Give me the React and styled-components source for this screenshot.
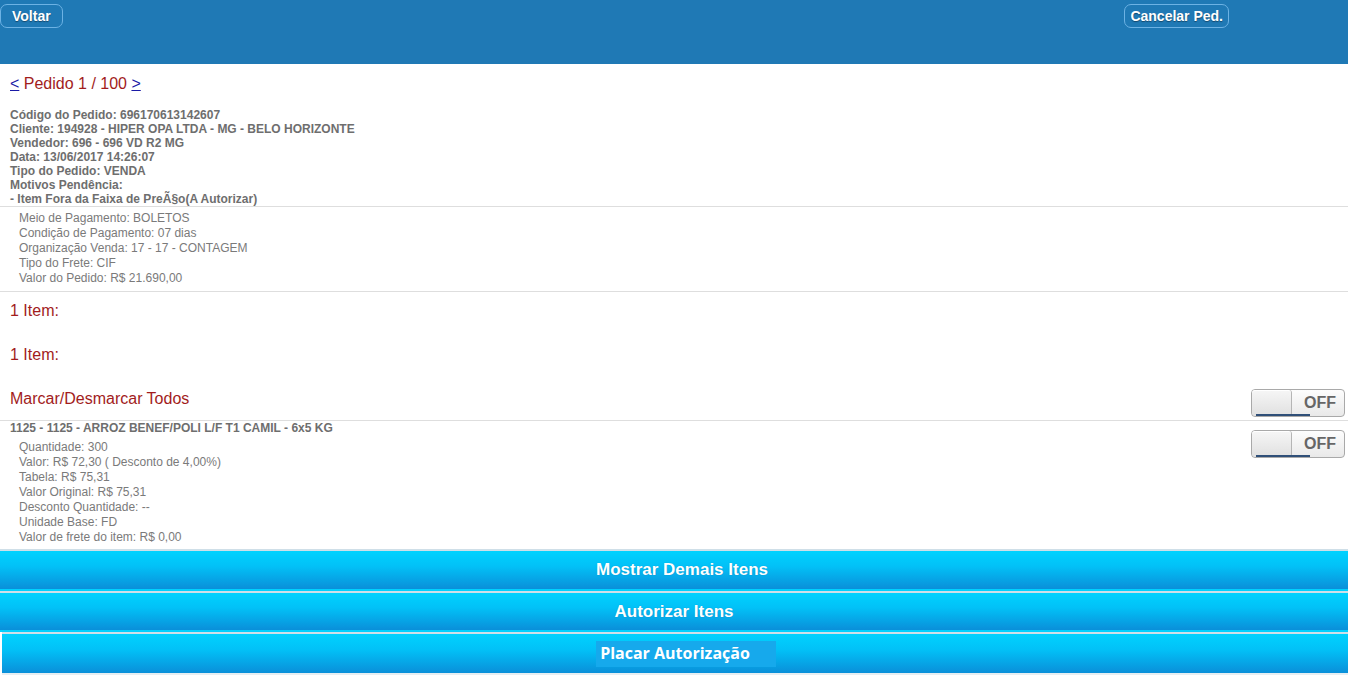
import React from "react";
import styled, { createGlobalStyle } from "styled-components";

const Global = createGlobalStyle`
  html, body { margin: 0; padding: 0; background: #fff; }
  body { font-family: "Liberation Sans", Arial, sans-serif; }
`;

const Header = styled.header`
  height: 64px;
  background: #1f79b5;
  display: flex;
  justify-content: space-between;
  align-items: flex-start;
  padding: 4px 119px 0 0;
  box-sizing: border-box;
`;

const HeadButton = styled.button`
  height: 24px;
  padding: 0 ${(p) => p.$pad || 11}px;
  border: 1px solid #6cb2e4;
  border-radius: 7px;
  background: #1f79b5;
  color: #fff;
  font: bold 14px "Liberation Sans", Arial, sans-serif;
  text-shadow: 0 1px 1px rgba(0, 0, 0, 0.4);
`;

const Nav = styled.div`
  padding: 10px 10px 0;
  height: 43px;
  box-sizing: border-box;
  font-size: 16px;
  color: #a21c1c;
  line-height: 20px;
`;

const NavLink = styled.a`
  color: #1a1aa6;
  text-decoration: underline;
`;

const Info = styled.div`
  padding: 1px 10px 0;
  font-size: 12px;
  font-weight: bold;
  color: #6e6e6e;
  line-height: 14px;
  border-bottom: 1px solid #dedede;
`;

const Details = styled.div`
  padding: ${(p) => p.$pad || "4px 19px 5px"};
  font-size: 12px;
  color: #7a7a7a;
  line-height: 15px;
  border-bottom: ${(p) => (p.$noBorder ? "none" : "1px solid #dedede")};
`;

const Heading = styled.div`
  display: flex;
  justify-content: space-between;
  align-items: center;
  height: ${(p) => p.$h || 44}px;
  padding: 0 3px ${(p) => p.$pb || 0}px 10px;
  font-size: 16px;
  color: #a21c1c;
  box-sizing: border-box;
  border-bottom: ${(p) => (p.$border ? "1px solid #dedede" : "none")};
`;

const ItemRow = styled.div`
  display: flex;
  justify-content: space-between;
  align-items: flex-start;
  padding: 0 3px 0 0;
`;

const ItemTitle = styled.div`
  padding: 0 10px;
  font-size: 12px;
  font-weight: bold;
  color: #6e6e6e;
  line-height: 14px;
`;

const Toggle = styled.div`
  width: 94px;
  height: 28px;
  box-sizing: border-box;
  border: 1px solid #a9a9a9;
  border-radius: 4px;
  display: flex;
  overflow: hidden;
  position: relative;
  align-self: ${(p) => (p.$bottom ? "flex-end" : "flex-start")};
  margin: ${(p) => p.$m || "0"};
  background: linear-gradient(#fdfdfd, #e9e9e9);
  &::after {
    content: "";
    position: absolute;
    left: 4px;
    bottom: 0;
    width: 54px;
    height: 2px;
    background: #2f4f78;
  }
`;

const Thumb = styled.div`
  width: 39px;
  height: 100%;
  border-right: 1px solid #b5b5b5;
  border-radius: 3px;
  background: linear-gradient(#f6f6f6, #e0e0e0);
  box-shadow: inset 0 1px 0 #fff;
`;

const ToggleLabel = styled.div`
  flex: 1;
  display: flex;
  align-items: center;
  justify-content: center;
  font-weight: bold;
  font-size: 16px;
  color: #666;
  padding-left: 4px;
`;

const Actions = styled.div`
  margin-top: 4px;
  display: flex;
  flex-direction: column;
`;

const ActionButton = styled.div`
  height: ${(p) => p.$h || 40}px;
  margin-left: ${(p) => p.$offset || 0}px;
  padding-left: ${(p) => p.$shift || 0}px;
  border-top: 2px solid #cfdfe8;
  background: linear-gradient(#00d2ff, #02c1f7 40%, #0a8fd9);
  display: flex;
  align-items: center;
  justify-content: center;
  color: #fff;
  font-weight: bold;
  font-size: 17px;
  text-shadow: 0 0 1px rgba(0, 60, 110, 0.35);
  border-bottom: 2px solid ${(p) => (p.$last ? "#e6eef2" : "transparent")};
  box-sizing: border-box;
`;

const Badge = styled.span`
  background: #16a9ec;
  padding: 2px 26px 3px 4px;
  font-family: "Open Sans", sans-serif;
  font-weight: bold;
  font-size: 16px;
  line-height: 21px;
  margin-left: 22px;
  margin-top: 0;
  text-shadow: none;
`;

function Switch({ m, bottom }) {
  return (
    <Toggle $m={m} $bottom={bottom}>
      <Thumb />
      <ToggleLabel>OFF</ToggleLabel>
    </Toggle>
  );
}

export default function App() {
  return (
    <>
      <Global />
      <Header>
        <HeadButton $pad={11}>Voltar</HeadButton>
        <HeadButton $pad={5}>Cancelar Ped.</HeadButton>
      </Header>
      <Nav>
        <NavLink>&lt;</NavLink> Pedido 1 / 100 <NavLink>&gt;</NavLink>
      </Nav>
      <Info>
        <div>Código do Pedido: 696170613142607</div>
        <div>Cliente: 194928 - HIPER OPA LTDA - MG - BELO HORIZONTE</div>
        <div>Vendedor: 696 - 696 VD R2 MG</div>
        <div>Data: 13/06/2017 14:26:07</div>
        <div>Tipo do Pedido: VENDA</div>
        <div>Motivos Pendência:</div>
        <div>- Item Fora da Faixa de PreÃ§o(A Autorizar)</div>
      </Info>
      <Details>
        <div>Meio de Pagamento: BOLETOS</div>
        <div>Condição de Pagamento: 07 dias</div>
        <div>Organização Venda: 17 - 17 - CONTAGEM</div>
        <div>Tipo do Frete: CIF</div>
        <div>Valor do Pedido: R$ 21.690,00</div>
      </Details>
      <Heading $h={41} $pb={3}>1 Item:</Heading>
      <Heading>1 Item:</Heading>
      <Heading $border>
        <span>Marcar/Desmarcar Todos</span>
        <Switch bottom m="0 0 3px 0" />
      </Heading>
      <ItemRow>
        <div>
          <ItemTitle>1125 - 1125 - ARROZ BENEF/POLI L/F T1 CAMIL - 6x5 KG</ItemTitle>
          <Details $noBorder $pad="5px 19px 0">
            <div>Quantidade: 300</div>
            <div>Valor: R$ 72,30 ( Desconto de 4,00%)</div>
            <div>Tabela: R$ 75,31</div>
            <div>Valor Original: R$ 75,31</div>
            <div>Desconto Quantidade: --</div>
            <div>Unidade Base: FD</div>
            <div>Valor de frete do item: R$ 0,00</div>
          </Details>
        </div>
        <Switch m="9px 0 0 0" />
      </ItemRow>
      <Actions>
        <ActionButton $h={42} $shift={16}>Mostrar Demais Itens</ActionButton>
        <ActionButton $h={41}>Autorizar Itens</ActionButton>
        <ActionButton $h={43} $offset={2} $last>
          <Badge>Placar Autorização</Badge>
        </ActionButton>
      </Actions>
    </>
  );
}
